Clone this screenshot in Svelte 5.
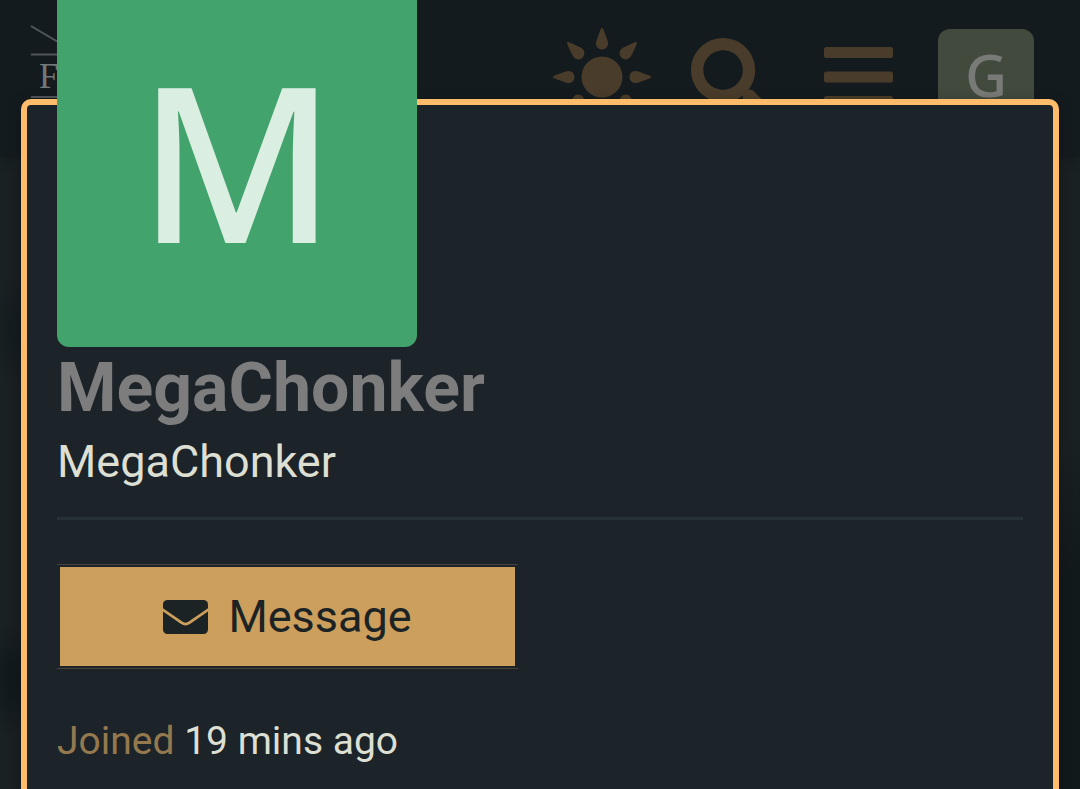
<script>
	let user = {
		name: 'MegaChonker',
		username: 'MegaChonker',
		joined: '19 mins ago'
	};

	const rays = [0, 45, 90, 135, 180, 225, 270, 315];
</script>

<div class="page">
	<header class="site-header">
		<a class="logo" href="/" aria-label="Home">
			<svg width="60" height="96" viewBox="0 0 60 96" fill="none" stroke="#50575a" stroke-width="2">
				<path d="M1 1L60 36M1 29.500H60M1 72H60" />
				<text x="9" y="63" stroke="none" fill="#73787a">F</text>
			</svg>
		</a>

		<nav class="icons">
			<button aria-label="Toggle theme">
				<svg width="98" height="98" viewBox="-49 -49 98 98" fill="currentColor">
					<circle r="20.5" />
					{#each rays as angle}
						<path transform="rotate({angle})" d="M0 -49C1 -49 1.5 -47.500 2 -46L5.500 -36.500C7.500 -31 4 -27.500 0 -27.500S-7.500 -31 -5.500 -36.500L-2 -46C-1.500 -47.500 -1 -49 0 -49Z" />
					{/each}
				</svg>
			</button>
			<button aria-label="Search">
				<svg width="79" height="79" viewBox="0 0 512 512" fill="currentColor">
					<path d="M505 442.700L405.300 343c-4.500-4.500-10.600-7-17-7H372c27.600-35.300 44-79.700 44-128C416 93.100 322.900 0 208 0S0 93.100 0 208s93.100 208 208 208c48.300 0 92.700-16.400 128-44v16.300c0 6.400 2.500 12.500 7 17l99.700 99.700c9.400 9.400 24.600 9.400 33.900 0l28.300-28.300c9.400-9.400 9.400-24.600.1-34zM208 336c-70.700 0-128-57.200-128-128 0-70.700 57.200-128 128-128 70.700 0 128 57.200 128 128 0 70.700-57.200 128-128 128z" />
				</svg>
			</button>
			<button aria-label="Menu">
				<svg width="69" height="60" viewBox="0 0 69 60" fill="currentColor">
					<rect width="69" height="11" rx="2.500" />
					<rect y="24.500" width="69" height="11" rx="2.500" />
					<rect y="49" width="69" height="11" rx="2.500" />
				</svg>
			</button>
			<button class="account" aria-label="Account">G</button>
		</nav>
	</header>

	<div class="overlay">
		<section class="user-card">
			<a class="avatar" href="/u/{user.username}">M</a>
			<h1>{user.name}</h1>
			<h2>{user.username}</h2>
			<hr />
			<button class="message">
				<svg width="45" height="34" viewBox="0 0 45 34">
					<rect width="45" height="34" rx="4.500" fill="currentColor" />
					<path d="M-1 9.200L18.500 22.700Q22.500 25.500 26.500 22.700L46 9.200" fill="none" stroke="#cc9f5c" stroke-width="2.800" />
				</svg>
				<span>Message</span>
			</button>
			<p class="joined"><span>Joined</span> {user.joined}</p>
		</section>
	</div>
</div>

<style>
	:global(body) {
		margin: 0;
		background: #1a2123;
	}

	.page {
		position: relative;
		min-height: 100vh;
		overflow: hidden;
		font-family: Roboto, 'Liberation Sans', sans-serif;
		background:
			radial-gradient(ellipse 26px 60px at 12px 680px, #12191c 20%, transparent),
			radial-gradient(ellipse 24px 60px at 16px 330px, #151c1f 20%, transparent),
			radial-gradient(ellipse 60px 280px at 100% 90%, #12191b 50%, transparent),
			#1a2123;
	}

	.site-header {
		display: flex;
		justify-content: space-between;
		padding: 29px 46px 32px 30px;
		background: #141b1e;
		box-shadow: 0 2px 8px #141b1e;
	}

	.logo {
		display: block;
		margin-top: -4px;
	}

	.logo text {
		font-family: 'Liberation Serif', serif;
		font-size: 35px;
	}

	.icons {
		display: flex;
		gap: 32px;
	}

	.icons button {
		display: flex;
		align-items: center;
		justify-content: center;
		width: 96px;
		height: 96px;
		padding: 0;
		border: 0;
		background: none;
		color: #4a3c2a;
		cursor: pointer;
	}

	.icons svg {
		flex: none;
	}

	.icons .account {
		display: block;
		padding-bottom: 4px;
		border-radius: 12px;
		background: #42493d;
		color: #777a76;
		font: 500 58px/92px 'Noto Sans', sans-serif;
	}

	.overlay {
		position: absolute;
		inset: 0;
		padding: 99px 21px 0;
	}

	.user-card {
		box-sizing: border-box;
		min-height: 100%;
		padding: 0 30px 30px;
		border: 6px solid #ffbc6b;
		border-radius: 10px;
		background: #1c2329;
		box-shadow: 0 4px 14px rgba(0, 0, 0, 0.3);
	}

	.avatar {
		display: block;
		width: 360px;
		height: 360px;
		margin-top: -118px;
		border-radius: 12px;
		background: #43a36c;
		color: #daeee2;
		font: 500 216px/344px 'Noto Sans', sans-serif;
		text-align: center;
		text-decoration: none;
	}

	h1 {
		margin: 0;
		color: #7d7d7d;
		font-size: 68px;
		font-weight: 700;
		line-height: 82px;
	}

	h2 {
		margin: 6px 0 28px;
		color: #dddfd3;
		font-size: 45px;
		font-weight: 400;
		line-height: 54px;
	}

	hr {
		height: 3px;
		margin: 0 0 44px;
		border: 0;
		background: #263136;
	}

	.message {
		display: flex;
		align-items: center;
		justify-content: center;
		gap: 20px;
		box-sizing: border-box;
		width: 461px;
		max-width: 100%;
		height: 105px;
		padding: 2px 3px;
		border: solid #47433a;
		border-width: 1px 0;
		background: #cc9f5c content-box;
		color: #1c2325;
		font-family: inherit;
		font-size: 45px;
		cursor: pointer;
	}

	.joined {
		margin: 49px 0 0;
		color: #dddfd3;
		font-size: 39px;
		line-height: 46px;
	}

	.joined span {
		color: #94794f;
	}
</style>
